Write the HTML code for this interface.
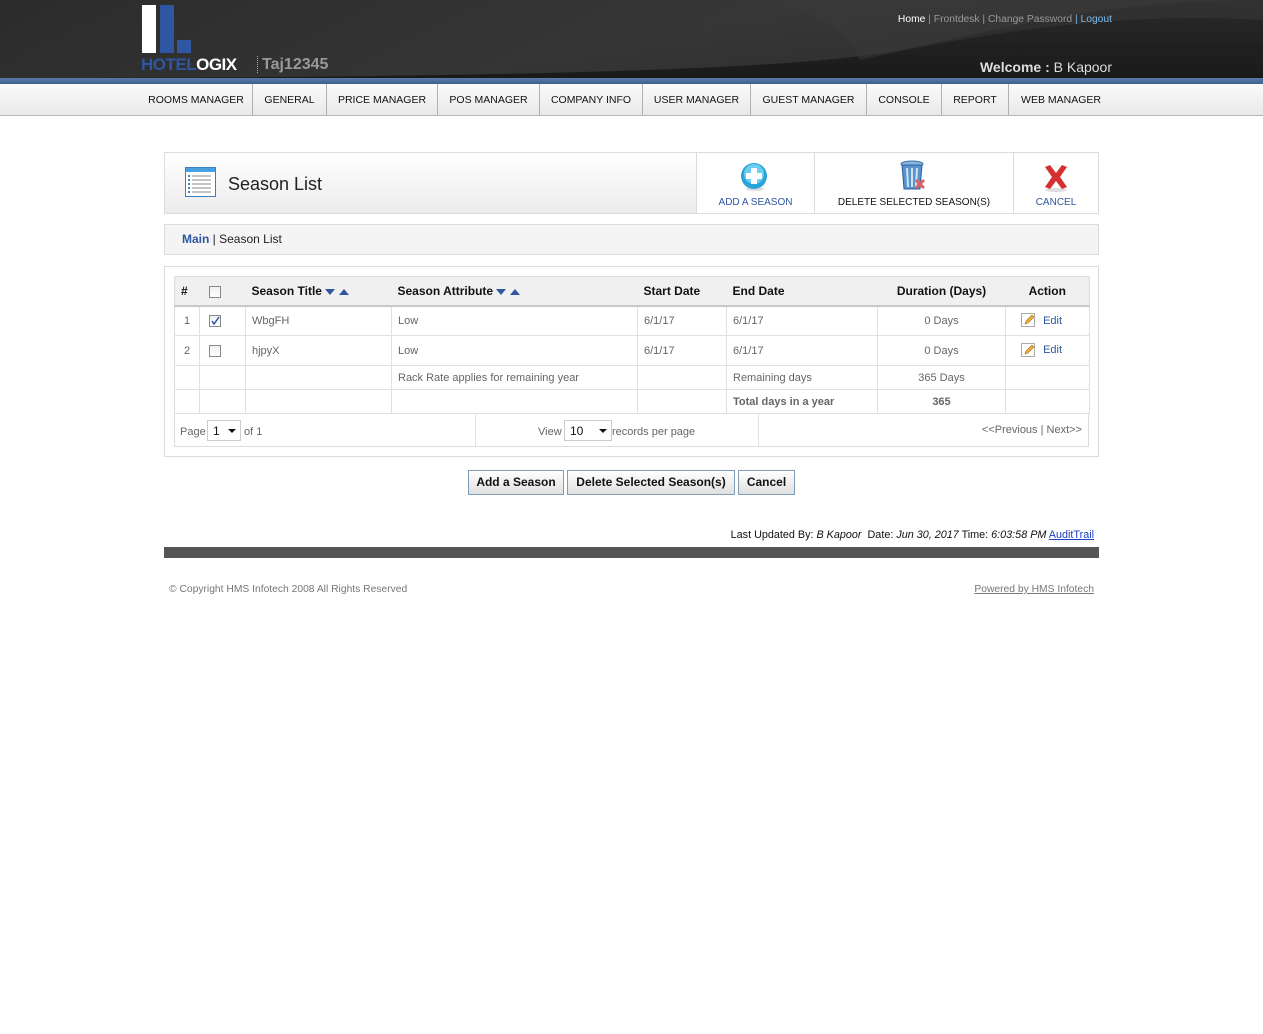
<!DOCTYPE html>
<html><head><meta charset="utf-8">
<style>
*{margin:0;padding:0;box-sizing:border-box}
body{width:1263px;height:1034px;background:#fff;font-family:"Liberation Sans",Arial,sans-serif;position:relative;overflow:hidden}
.a{position:absolute}
#hdr{left:0;top:0;width:1263px;height:78px;background:#1e1e1e;overflow:hidden}
#blue{left:0;top:78px;width:1263px;height:6px;background:linear-gradient(#5a7bab,#3f5f8c)}
#nav{left:0;top:84px;width:1263px;height:32px;background:linear-gradient(#fafafa,#e9e9e9);border-bottom:1px solid #b5b5b5}
.ni{position:absolute;top:84px;height:31px;line-height:32px;font-size:10.5px;color:#111;text-align:center}
.sep{position:absolute;top:84px;width:1px;height:31px;background:#b0b0b0}
.box{border:1px solid #dcdcdc}
td{font-size:11px;color:#666;border-right:1px solid #e0e0e0;border-bottom:1px solid #e0e0e0;padding:0 6px}
th{font-size:12px;color:#111;text-align:left;padding:0 6px;font-weight:bold}
.cb{display:inline-block;width:12px;height:12px;border:1px solid #888;background:linear-gradient(#f0f0f0,#fff);vertical-align:middle;position:relative}
.btn{position:absolute;top:470px;height:25px;border:1px solid #7f9db9;background:linear-gradient(#fff,#e0e0e0);font-size:12px;font-weight:bold;color:#111;text-align:center;line-height:23px}
.tri{display:inline-block;width:0;height:0;border-left:5px solid transparent;border-right:5px solid transparent;vertical-align:middle}
</style></head><body>
<div id="hdr" class="a">
<svg width="1263" height="78" style="position:absolute;left:0;top:0">
<defs><linearGradient id="g1" x1="0" y1="0" x2="0" y2="1"><stop offset="0" stop-color="#2a2a2a"/><stop offset="1" stop-color="#1a1a1a"/></linearGradient>
<linearGradient id="g2" x1="0" y1="0" x2="1" y2="0.3"><stop offset="0" stop-color="#2c2c2c"/><stop offset="0.6" stop-color="#3b3b3b"/><stop offset="1" stop-color="#333"/></linearGradient></defs>
<rect width="1263" height="78" fill="url(#g1)"/>
<path d="M0 0H1263V0C1100 0 1000 30 900 50 800 70 500 78 0 78Z" fill="url(#g2)" opacity="0.8"/>
<path d="M700 0H1263V20C1100 10 950 40 860 60 830 0 760 0 700 0Z" fill="#3a3a3a" opacity="0.5"/>
</svg></div>
<div id="blue" class="a"></div>
<div id="nav" class="a"></div>
<div class="a" style="left:142px;top:5px;width:14px;height:48px;background:#fff"></div>
<div class="a" style="left:160px;top:5px;width:14px;height:48px;background:#2f56a0"></div>
<div class="a" style="left:177px;top:40px;width:14px;height:13px;background:#2f56a0"></div>
<div class="a" style="left:141px;top:55px;font-size:17px;font-weight:bold;letter-spacing:-0.5px;color:#2f56a0">HOTEL<span style="color:#fff">OGIX</span></div>
<div class="a" style="left:257px;top:56px;height:17px;border-left:1px dotted #aaa"></div>
<div class="a" style="left:262px;top:56px;font-size:16px;font-weight:bold;color:#999">Taj12345</div>
<div class="a" style="right:151px;top:14px;font-size:10.3px;color:#999;white-space:nowrap"><span style="color:#fff">Home</span> | Frontdesk | Change Password <span style="color:#7ab8e8">| Logout</span></div>
<div class="a" style="right:151px;top:59px;font-size:14px;color:#ddd"><b>Welcome :</b> B Kapoor</div>
<div class="ni" style="left:140px;width:112px">ROOMS MANAGER</div><div class="sep" style="left:252px"></div>
<div class="ni" style="left:253px;width:73px">GENERAL</div><div class="sep" style="left:326px"></div>
<div class="ni" style="left:327px;width:110px">PRICE MANAGER</div><div class="sep" style="left:437px"></div>
<div class="ni" style="left:438px;width:101px">POS MANAGER</div><div class="sep" style="left:539px"></div>
<div class="ni" style="left:540px;width:102px">COMPANY INFO</div><div class="sep" style="left:642px"></div>
<div class="ni" style="left:643px;width:107px">USER MANAGER</div><div class="sep" style="left:750px"></div>
<div class="ni" style="left:751px;width:115px">GUEST MANAGER</div><div class="sep" style="left:866px"></div>
<div class="ni" style="left:867px;width:74px">CONSOLE</div><div class="sep" style="left:941px"></div>
<div class="ni" style="left:942px;width:66px">REPORT</div><div class="sep" style="left:1008px"></div>
<div class="ni" style="left:1009px;width:104px">WEB MANAGER</div>

<div class="a box" style="left:164px;top:152px;width:935px;height:62px;background:linear-gradient(#fff,#ececec)"></div>
<div class="a" style="left:697px;top:153px;width:401px;height:60px;background:#fff"></div>
<div class="a" style="left:696px;top:153px;width:1px;height:60px;background:#dcdcdc"></div>
<div class="a" style="left:814px;top:153px;width:1px;height:60px;background:#dcdcdc"></div>
<div class="a" style="left:1013px;top:153px;width:1px;height:60px;background:#dcdcdc"></div>
<svg class="a" style="left:185px;top:167px" width="31" height="30"><rect x="0.5" y="0.5" width="30" height="29" fill="#fff" stroke="#3a80c8"/><rect x="1" y="1" width="29" height="4" fill="#4aa0e0"/><g stroke="#888"><line x1="7" y1="9" x2="26" y2="9"/><line x1="7" y1="13" x2="26" y2="13"/><line x1="7" y1="17" x2="26" y2="17"/><line x1="7" y1="21" x2="26" y2="21"/><line x1="7" y1="25" x2="26" y2="25"/></g><g fill="#3a80c8"><rect x="3" y="8" width="2" height="2"/><rect x="3" y="12" width="2" height="2"/><rect x="3" y="16" width="2" height="2"/><rect x="3" y="20" width="2" height="2"/><rect x="3" y="24" width="2" height="2"/></g></svg>
<div class="a" style="left:228px;top:174px;font-size:18px;color:#222">Season List</div>
<svg class="a" style="left:740px;top:162px" width="30" height="30"><ellipse cx="15" cy="27" rx="9" ry="2" fill="#ddd"/><circle cx="14" cy="14" r="13" fill="#2aa3d8"/><circle cx="14" cy="12" r="10" fill="#6dcdf0"/><path d="M11 6h6v5h5v6h-5v5h-6v-5H6v-6h5z" fill="#fff"/></svg>
<div class="a" style="left:697px;top:197px;width:117px;text-align:center;font-size:10px;color:#2f56a0">ADD A SEASON</div>
<svg class="a" style="left:900px;top:160px" width="30" height="32"><ellipse cx="12" cy="4" rx="11" ry="3" fill="#8ab8e0" stroke="#3a6ea8"/><path d="M2 5l2 24h16l2-24z" fill="#5a94cc" stroke="#2e5f98"/><g stroke="#cfe3f5" stroke-width="2"><line x1="7" y1="8" x2="8" y2="27"/><line x1="12" y1="8" x2="12" y2="27"/><line x1="17" y1="8" x2="16" y2="27"/></g><path d="M17 19l3 3 3-3 2 2-3 3 3 3-2 2-3-3-3 3-2-2 3-3-3-3z" fill="#e06060"/></svg>
<div class="a" style="left:815px;top:197px;width:198px;text-align:center;font-size:10px;color:#111">DELETE SELECTED SEASON(S)</div>
<svg class="a" style="left:1042px;top:164px" width="28" height="28"><ellipse cx="14" cy="26" rx="11" ry="2" fill="#ddd"/><path d="M3 3l5-2 6 8 6-8 5 2-7 10 7 10-5 2-6-8-6 8-5-2 7-10z" fill="#d63030"/></svg>
<div class="a" style="left:1014px;top:197px;width:84px;text-align:center;font-size:10px;color:#2f56a0">CANCEL</div>

<div class="a box" style="left:164px;top:224px;width:935px;height:31px;background:#f4f4f4"></div>
<div class="a" style="left:182px;top:232px;font-size:12px;color:#222"><b style="color:#2f56a0">Main</b> | Season List</div>

<div class="a box" style="left:164px;top:266px;width:935px;height:191px"></div>
<table class="a" style="left:174px;top:276px;width:915px;border-collapse:collapse;border:1px solid #dcdcdc;table-layout:fixed">
<colgroup><col style="width:25px"><col style="width:46px"><col style="width:146px"><col style="width:246px"><col style="width:89px"><col style="width:151px"><col style="width:128px"><col style="width:84px"></colgroup>
<tr style="height:29px;background:#f0f0f0;border-bottom:2px solid #c8c8c8"><th>#</th><th style="padding-left:9px"><span class="cb"></span></th><th>Season Title <span class="tri" style="border-top:6px solid #2f56a0"></span> <span class="tri" style="border-bottom:6px solid #2f56a0"></span></th><th>Season Attribute <span class="tri" style="border-top:6px solid #2f56a0"></span> <span class="tri" style="border-bottom:6px solid #2f56a0"></span></th><th>Start Date</th><th>End Date</th><th style="text-align:center">Duration (Days)</th><th style="text-align:center">Action</th></tr>
<tr style="height:30px"><td style="text-align:center">1</td><td style="padding-left:9px"><span class="cb"><svg class="a" style="left:0;top:0" width="10" height="10"><path d="M2 5l2 3 5-7" stroke="#2f56a0" stroke-width="1.5" fill="none"/></svg></span></td><td>WbgFH</td><td>Low</td><td>6/1/17</td><td>6/1/17</td><td style="text-align:center">0 Days</td><td style="padding-left:15px"><svg width="15" height="15" style="vertical-align:middle"><rect x="0.5" y="0.5" width="13" height="13" fill="#fff" stroke="#aaa"/><path d="M4 11l1-3 6-6 2 2-6 6z" fill="#f0b030" stroke="#a07020" stroke-width=".6"/></svg> <span style="color:#2f56a0;margin-left:4px">Edit</span></td></tr>
<tr style="height:30px"><td style="text-align:center">2</td><td style="padding-left:9px"><span class="cb"></span></td><td>hjpyX</td><td>Low</td><td>6/1/17</td><td>6/1/17</td><td style="text-align:center">0 Days</td><td style="padding-left:15px"><svg width="15" height="15" style="vertical-align:middle"><rect x="0.5" y="0.5" width="13" height="13" fill="#fff" stroke="#aaa"/><path d="M4 11l1-3 6-6 2 2-6 6z" fill="#f0b030" stroke="#a07020" stroke-width=".6"/></svg> <span style="color:#2f56a0;margin-left:4px">Edit</span></td></tr>
<tr style="height:24px"><td></td><td></td><td></td><td>Rack Rate applies for remaining year</td><td></td><td>Remaining days</td><td style="text-align:center">365 Days</td><td></td></tr>
<tr style="height:24px"><td></td><td></td><td></td><td></td><td></td><td style="font-weight:bold">Total days in a year</td><td style="text-align:center;font-weight:bold">365</td><td></td></tr>
</table>
<div class="a" style="left:174px;top:413px;width:915px;height:34px;border:1px solid #dcdcdc;border-top:none"></div>
<div class="a" style="left:475px;top:413px;width:1px;height:33px;background:#e0e0e0"></div>
<div class="a" style="left:758px;top:413px;width:1px;height:33px;background:#e0e0e0"></div>
<div class="a" style="left:180px;top:426px;font-size:11px;color:#666">Page</div>
<div class="a" style="left:207px;top:420px;width:34px;height:21px;border:1px solid #ccc;font-size:12px;color:#111;padding:3px 5px">1<span class="tri" style="position:absolute;right:4px;top:8px;border-top:4px solid #111;border-left-width:4px;border-right-width:4px"></span></div>
<div class="a" style="left:244px;top:426px;font-size:11px;color:#666">of 1</div>
<div class="a" style="left:538px;top:426px;font-size:11px;color:#666">View</div>
<div class="a" style="left:564px;top:420px;width:48px;height:21px;border:1px solid #ccc;font-size:12px;color:#111;padding:3px 5px">10<span class="tri" style="position:absolute;right:4px;top:8px;border-top:4px solid #111;border-left-width:4px;border-right-width:4px"></span></div>
<div class="a" style="left:612px;top:426px;font-size:11px;color:#666">records per page</div>
<div class="a" style="right:181px;top:424px;font-size:11px;color:#666">&lt;&lt;Previous | Next&gt;&gt;</div>

<div class="btn" style="left:468px;width:96px">Add a Season</div>
<div class="btn" style="left:567px;width:168px">Delete Selected Season(s)</div>
<div class="btn" style="left:738px;width:57px">Cancel</div>

<div class="a" style="right:169px;top:529px;font-size:10.8px;color:#111;white-space:nowrap">Last Updated By: <i>B Kapoor</i>&nbsp; Date: <i>Jun 30, 2017</i> Time: <i>6:03:58 PM</i> <span style="color:#1a3fc0;text-decoration:underline">AuditTrail</span></div>
<div class="a" style="left:164px;top:547px;width:935px;height:11px;background:#555"></div>
<div class="a" style="left:169px;top:584px;font-size:10.3px;color:#777">© Copyright HMS Infotech 2008 All Rights Reserved</div>
<div class="a" style="right:169px;top:584px;font-size:10.3px;color:#777;text-decoration:underline">Powered by HMS Infotech</div>
</body></html>
